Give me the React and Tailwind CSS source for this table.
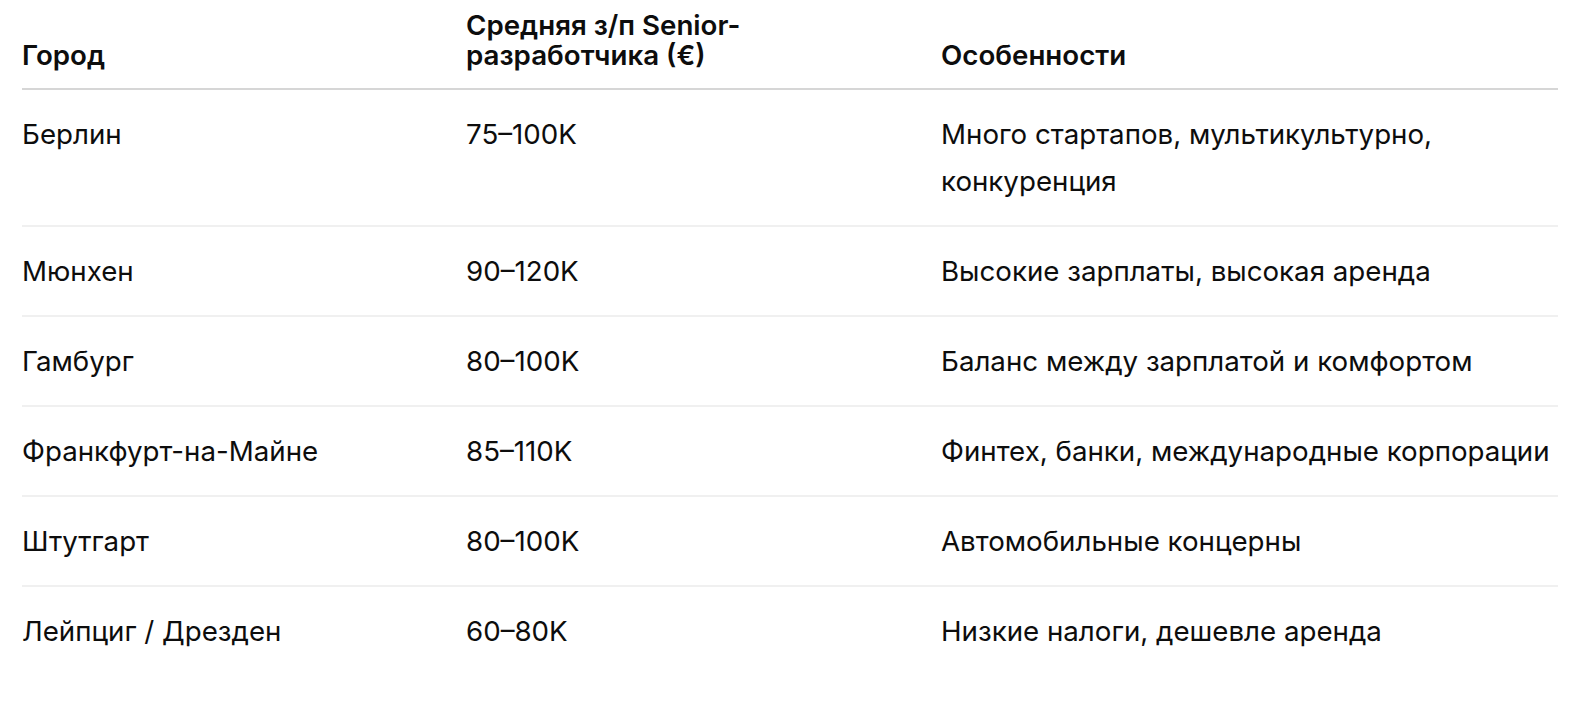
import React from "react";

const rows = [
  ["Берлин", "75–100K", "Много стартапов, мультикультурно, конкуренция"],
  ["Мюнхен", "90–120K", "Высокие зарплаты, высокая аренда"],
  ["Гамбург", "80–100K", "Баланс между зарплатой и комфортом"],
  ["Франкфурт-на-Майне", "85–110K", "Финтех, банки, международные корпорации"],
  ["Штутгарт", "80–100K", "Автомобильные концерны"],
  ["Лейпциг / Дрезден", "60–80K", "Низкие налоги, дешевле аренда"],
];

export default function App() {
  return (
    <div
      className="w-[1590px] h-[710px] bg-white text-[#0d0d0d] px-[22px] overflow-hidden"
      style={{ fontFamily: "Inter, 'Noto Sans', sans-serif" }}
    >
      <div className="w-[1536px] text-[27.7px]">
        <div className="grid grid-cols-[444px_475px_617px] border-b-2 border-[#d6d6d6] font-semibold leading-[30px]">
          <div className="pt-[10px] pb-[18px] self-end">Город</div>
          <div className="pt-[10px] pb-[18px] pr-[40px] self-end">Средняя з/п Senior-разработчика (€)</div>
          <div className="pt-[10px] pb-[18px] self-end">Особенности</div>
        </div>
        {rows.map((r, i) => (
          <div
            key={i}
            className={
              "grid grid-cols-[444px_475px_617px] leading-[47px] " +
              (i < rows.length - 1 ? "border-b-2 border-[#f0f0f0]" : "")
            }
          >
            <div className="pt-[21px] pb-[20px]">{r[0]}</div>
            <div className="pt-[21px] pb-[20px]">{r[1]}</div>
            <div className="pt-[21px] pb-[20px] pr-[4px]">{r[2]}</div>
          </div>
        ))}
      </div>
    </div>
  );
}
